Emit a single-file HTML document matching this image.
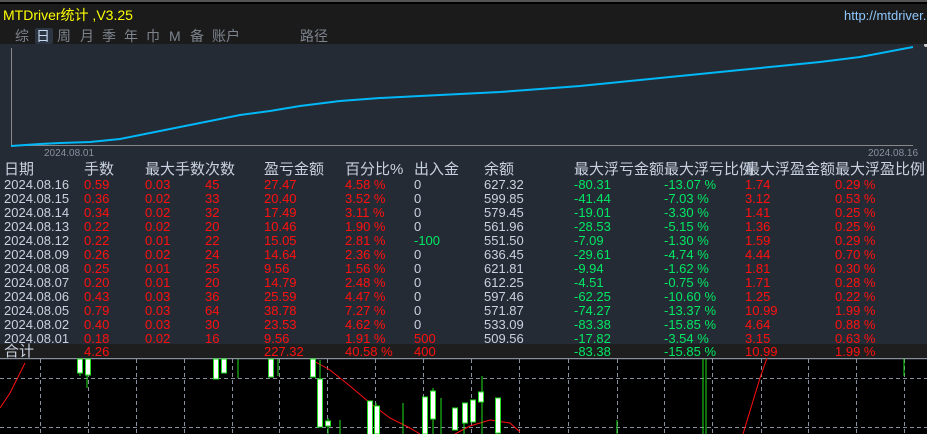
<!DOCTYPE html>
<html><head><meta charset="utf-8"><style>
*{margin:0;padding:0}
body{width:927px;height:434px;overflow:hidden;background:#000;position:relative;font-family:"Liberation Sans","Noto Sans CJK SC",sans-serif}
.a{position:absolute;white-space:nowrap}
.r{position:absolute;left:0;width:927px;height:14px;font-size:13px;line-height:14px;color:#c8d2e0}
.r span{position:absolute;top:0}
.R{color:#ff1010}.G{color:#00e864}
.h{position:absolute;top:161px;left:0;width:927px;font-size:15px;line-height:18px;color:#c8d2e0}
.h span{position:absolute}
.n{position:absolute;top:27px;font-size:14px;color:#7c848e;line-height:18px}
</style></head><body>
<div class="a" style="left:0;top:0;width:927px;height:2px;background:#555"></div>
<div class="a" style="left:0;top:4px;width:927px;height:40px;background:#1b1b1b"></div>
<div class="a" style="left:3px;top:6px;font-size:14px;color:#ffff00;line-height:18px">MTDriver统计 ,V3.25</div>
<div class="a" style="left:844px;top:8px;font-size:13px;color:#8fc8ff;line-height:16px">http://mtdriver.</div>
<div class="a" style="left:35px;top:28px;width:18px;height:16px;background:#2c3542;border-radius:2px"></div>
<div class="n" style="left:15px">综</div><div class="n" style="left:36px;color:#c8d8f0">日</div><div class="n" style="left:57px">周</div><div class="n" style="left:80px">月</div><div class="n" style="left:102px">季</div><div class="n" style="left:124px">年</div><div class="n" style="left:146px">巾</div><div class="n" style="left:169px">M</div><div class="n" style="left:190px">备</div><div class="n" style="left:212px">账户</div><div class="n" style="left:300px">路径</div>
<div class="a" style="left:0;top:44px;width:927px;height:300px;background:#252b34"></div>
<div class="a" style="left:0;top:344px;width:927px;height:14px;background:#1e1e1e"></div>
<svg class="a" style="left:0;top:44px" width="927" height="120">
<line x1="11.5" y1="4" x2="11.5" y2="102" stroke="#888" stroke-width="1"/>
<line x1="11" y1="101.5" x2="913" y2="101.5" stroke="#888" stroke-width="1"/>
<polyline fill="none" stroke="#00b8f8" stroke-width="2" points="11,102 40,100 60,99 90,98 120,95 150,89 180,83 200,79 220,75 240,71 270,67 300,62 340,57 380,54 420,52 460,50 500,48 540,45 580,42 620,38 660,34 700,30 740,26 780,22 820,18 860,13 913,3"/>
<circle cx="926" cy="1" r="2" fill="#ccc"/>
<text x="44" y="112" font-size="10" fill="#8890a0" font-family="Liberation Sans">2024.08.01</text>
<text x="868" y="112" font-size="10" fill="#8890a0" font-family="Liberation Sans">2024.08.16</text>
</svg>
<div class="h"><span style="left:4px">日期</span><span style="left:84px">手数</span><span style="left:145px">最大手数</span><span style="left:205px">次数</span><span style="left:264px">盈亏金额</span><span style="left:345px">百分比%</span><span style="left:414px">出入金</span><span style="left:484px">余额</span><span style="left:574px">最大浮亏金额</span><span style="left:664px">最大浮亏比例</span><span style="left:745px">最大浮盈金额</span><span style="left:835px">最大浮盈比例</span></div>
<div class="r" style="top:178px"><span style="left:4px">2024.08.16</span><span class="R" style="left:84px">0.59</span><span class="R" style="left:145px">0.03</span><span class="R" style="left:205px">45</span><span class="R" style="left:264px">27.47</span><span class="R" style="left:345px">4.58 %</span><span style="left:414px">0</span><span style="left:484px">627.32</span><span class="G" style="left:574px">-80.31</span><span class="G" style="left:664px">-13.07 %</span><span class="R" style="left:745px">1.74</span><span class="R" style="left:835px">0.29 %</span></div>
<div class="r" style="top:192px"><span style="left:4px">2024.08.15</span><span class="R" style="left:84px">0.36</span><span class="R" style="left:145px">0.02</span><span class="R" style="left:205px">33</span><span class="R" style="left:264px">20.40</span><span class="R" style="left:345px">3.52 %</span><span style="left:414px">0</span><span style="left:484px">599.85</span><span class="G" style="left:574px">-41.44</span><span class="G" style="left:664px">-7.03 %</span><span class="R" style="left:745px">3.12</span><span class="R" style="left:835px">0.53 %</span></div>
<div class="r" style="top:206px"><span style="left:4px">2024.08.14</span><span class="R" style="left:84px">0.34</span><span class="R" style="left:145px">0.02</span><span class="R" style="left:205px">32</span><span class="R" style="left:264px">17.49</span><span class="R" style="left:345px">3.11 %</span><span style="left:414px">0</span><span style="left:484px">579.45</span><span class="G" style="left:574px">-19.01</span><span class="G" style="left:664px">-3.30 %</span><span class="R" style="left:745px">1.41</span><span class="R" style="left:835px">0.25 %</span></div>
<div class="r" style="top:220px"><span style="left:4px">2024.08.13</span><span class="R" style="left:84px">0.22</span><span class="R" style="left:145px">0.02</span><span class="R" style="left:205px">20</span><span class="R" style="left:264px">10.46</span><span class="R" style="left:345px">1.90 %</span><span style="left:414px">0</span><span style="left:484px">561.96</span><span class="G" style="left:574px">-28.53</span><span class="G" style="left:664px">-5.15 %</span><span class="R" style="left:745px">1.36</span><span class="R" style="left:835px">0.25 %</span></div>
<div class="r" style="top:234px"><span style="left:4px">2024.08.12</span><span class="R" style="left:84px">0.22</span><span class="R" style="left:145px">0.01</span><span class="R" style="left:205px">22</span><span class="R" style="left:264px">15.05</span><span class="R" style="left:345px">2.81 %</span><span class="G" style="left:414px">-100</span><span style="left:484px">551.50</span><span class="G" style="left:574px">-7.09</span><span class="G" style="left:664px">-1.30 %</span><span class="R" style="left:745px">1.59</span><span class="R" style="left:835px">0.29 %</span></div>
<div class="r" style="top:248px"><span style="left:4px">2024.08.09</span><span class="R" style="left:84px">0.26</span><span class="R" style="left:145px">0.02</span><span class="R" style="left:205px">24</span><span class="R" style="left:264px">14.64</span><span class="R" style="left:345px">2.36 %</span><span style="left:414px">0</span><span style="left:484px">636.45</span><span class="G" style="left:574px">-29.61</span><span class="G" style="left:664px">-4.74 %</span><span class="R" style="left:745px">4.44</span><span class="R" style="left:835px">0.70 %</span></div>
<div class="r" style="top:262px"><span style="left:4px">2024.08.08</span><span class="R" style="left:84px">0.25</span><span class="R" style="left:145px">0.01</span><span class="R" style="left:205px">25</span><span class="R" style="left:264px">9.56</span><span class="R" style="left:345px">1.56 %</span><span style="left:414px">0</span><span style="left:484px">621.81</span><span class="G" style="left:574px">-9.94</span><span class="G" style="left:664px">-1.62 %</span><span class="R" style="left:745px">1.81</span><span class="R" style="left:835px">0.30 %</span></div>
<div class="r" style="top:276px"><span style="left:4px">2024.08.07</span><span class="R" style="left:84px">0.20</span><span class="R" style="left:145px">0.01</span><span class="R" style="left:205px">20</span><span class="R" style="left:264px">14.79</span><span class="R" style="left:345px">2.48 %</span><span style="left:414px">0</span><span style="left:484px">612.25</span><span class="G" style="left:574px">-4.51</span><span class="G" style="left:664px">-0.75 %</span><span class="R" style="left:745px">1.71</span><span class="R" style="left:835px">0.28 %</span></div>
<div class="r" style="top:290px"><span style="left:4px">2024.08.06</span><span class="R" style="left:84px">0.43</span><span class="R" style="left:145px">0.03</span><span class="R" style="left:205px">36</span><span class="R" style="left:264px">25.59</span><span class="R" style="left:345px">4.47 %</span><span style="left:414px">0</span><span style="left:484px">597.46</span><span class="G" style="left:574px">-62.25</span><span class="G" style="left:664px">-10.60 %</span><span class="R" style="left:745px">1.25</span><span class="R" style="left:835px">0.22 %</span></div>
<div class="r" style="top:304px"><span style="left:4px">2024.08.05</span><span class="R" style="left:84px">0.79</span><span class="R" style="left:145px">0.03</span><span class="R" style="left:205px">64</span><span class="R" style="left:264px">38.78</span><span class="R" style="left:345px">7.27 %</span><span style="left:414px">0</span><span style="left:484px">571.87</span><span class="G" style="left:574px">-74.27</span><span class="G" style="left:664px">-13.37 %</span><span class="R" style="left:745px">10.99</span><span class="R" style="left:835px">1.99 %</span></div>
<div class="r" style="top:318px"><span style="left:4px">2024.08.02</span><span class="R" style="left:84px">0.40</span><span class="R" style="left:145px">0.03</span><span class="R" style="left:205px">30</span><span class="R" style="left:264px">23.53</span><span class="R" style="left:345px">4.62 %</span><span style="left:414px">0</span><span style="left:484px">533.09</span><span class="G" style="left:574px">-83.38</span><span class="G" style="left:664px">-15.85 %</span><span class="R" style="left:745px">4.64</span><span class="R" style="left:835px">0.88 %</span></div>
<div class="r" style="top:332px"><span style="left:4px">2024.08.01</span><span class="R" style="left:84px">0.18</span><span class="R" style="left:145px">0.02</span><span class="R" style="left:205px">16</span><span class="R" style="left:264px">9.56</span><span class="R" style="left:345px">1.91 %</span><span class="R" style="left:414px">500</span><span style="left:484px">509.56</span><span class="G" style="left:574px">-17.82</span><span class="G" style="left:664px">-3.54 %</span><span class="R" style="left:745px">3.15</span><span class="R" style="left:835px">0.63 %</span></div>
<div class="r" style="top:345px"><span style="left:4px;font-size:15px">合计</span><span class="R" style="left:84px">4.26</span><span class="R" style="left:264px">227.32</span><span class="R" style="left:345px">40.58 %</span><span class="R" style="left:414px">400</span><span class="G" style="left:574px">-83.38</span><span class="G" style="left:664px">-15.85 %</span><span class="R" style="left:745px">10.99</span><span class="R" style="left:835px">1.99 %</span></div>
<svg class="a" style="left:0;top:358px" width="927" height="76">
<line x1="0" y1="0.5" x2="927" y2="0.5" stroke="#8890a0" stroke-width="1.5"/>
<g stroke="#8890a0" stroke-dasharray="4,3" stroke-width="1">
<line x1="0" y1="20.5" x2="927" y2="20.5"/><line x1="0" y1="69.5" x2="927" y2="69.5"/>
<line x1="40.5" y1="1" x2="40.5" y2="76"/><line x1="88.5" y1="1" x2="88.5" y2="76"/><line x1="136.5" y1="1" x2="136.5" y2="76"/><line x1="184.5" y1="1" x2="184.5" y2="76"/><line x1="232.5" y1="1" x2="232.5" y2="76"/><line x1="279.5" y1="1" x2="279.5" y2="76"/><line x1="327.5" y1="1" x2="327.5" y2="76"/><line x1="375.5" y1="1" x2="375.5" y2="76"/><line x1="423.5" y1="1" x2="423.5" y2="76"/><line x1="471.5" y1="1" x2="471.5" y2="76"/><line x1="519.5" y1="1" x2="519.5" y2="76"/><line x1="568.5" y1="1" x2="568.5" y2="76"/><line x1="617.5" y1="1" x2="617.5" y2="76"/><line x1="664.5" y1="1" x2="664.5" y2="76"/><line x1="712.5" y1="1" x2="712.5" y2="76"/><line x1="761.5" y1="1" x2="761.5" y2="76"/><line x1="808.5" y1="1" x2="808.5" y2="76"/><line x1="856.5" y1="1" x2="856.5" y2="76"/><line x1="904.5" y1="1" x2="904.5" y2="76"/>
</g>
<g stroke="#ff1010" fill="none" stroke-width="1"><polyline points="0,50 10,35 25,5"/><polyline points="312,2 330,12 350,28 370,45 390,60 410,70 420,76"/><polyline points="455,76 470,68 490,62 510,65 520,74"/><polyline points="743,76 760,20 767,0"/></g>
<g stroke="#20e020" stroke-width="1">
<line x1="80" y1="1" x2="80" y2="18"/><line x1="87" y1="1" x2="87" y2="30"/><line x1="216" y1="1" x2="216" y2="20"/><line x1="224" y1="1" x2="224" y2="15"/><line x1="238" y1="1" x2="238" y2="20"/><line x1="272" y1="1" x2="272" y2="18"/><line x1="278" y1="1" x2="278" y2="18"/><line x1="320" y1="2" x2="320" y2="40"/><line x1="328" y1="60" x2="328" y2="76"/><line x1="340" y1="62" x2="340" y2="76"/><line x1="370" y1="55" x2="370" y2="76"/><line x1="376" y1="45" x2="376" y2="76"/><line x1="403" y1="45" x2="403" y2="76"/><line x1="433" y1="30" x2="433" y2="76"/><line x1="441" y1="40" x2="441" y2="76"/><line x1="464" y1="45" x2="464" y2="76"/><line x1="482" y1="18" x2="482" y2="76"/><line x1="497" y1="48" x2="497" y2="76"/><line x1="703" y1="1" x2="703" y2="76"/><line x1="706" y1="1" x2="706" y2="76"/><line x1="904" y1="1" x2="904" y2="18"/><line x1="617" y1="62" x2="617" y2="76"/>
</g>
<g fill="#fff" stroke="#20e020" stroke-width="1">
<rect x="77.5" y="1" width="5" height="14"/><rect x="85.5" y="1" width="5" height="16"/><rect x="213.5" y="1" width="5" height="20"/><rect x="221.5" y="1" width="5" height="14"/><rect x="268.5" y="1" width="5" height="18"/><rect x="310.5" y="1" width="5" height="18"/><rect x="317.5" y="21" width="5" height="48"/><rect x="325.5" y="63" width="5" height="5"/><rect x="367.5" y="43" width="5" height="34"/><rect x="374.5" y="48" width="5" height="28"/><rect x="422.5" y="39" width="5" height="37"/><rect x="430.5" y="33" width="5" height="28"/><rect x="452.5" y="50" width="5" height="22"/><rect x="462.5" y="45" width="5" height="20"/><rect x="470.5" y="42" width="5" height="22"/><rect x="478.5" y="34" width="5" height="10"/><rect x="495.5" y="40" width="5" height="35"/>
</g>
</svg>
</body></html>
